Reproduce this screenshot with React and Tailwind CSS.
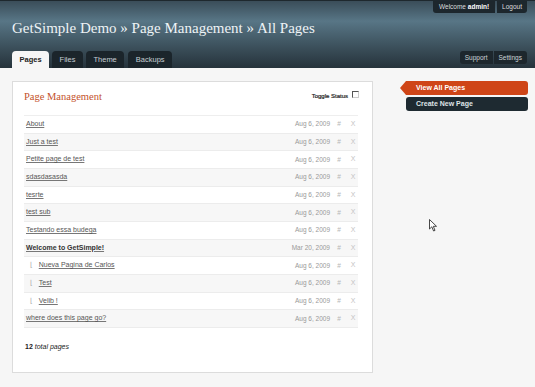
import React from "react";

const pages = [
  { title: "About", date: "Aug 6, 2009" },
  { title: "Just a test", date: "Aug 6, 2009" },
  { title: "Petite page de test", date: "Aug 6, 2009" },
  { title: "sdasdasasda", date: "Aug 6, 2009" },
  { title: "tesrte", date: "Aug 6, 2009" },
  { title: "test sub", date: "Aug 6, 2009" },
  { title: "Testando essa budega", date: "Aug 6, 2009" },
  { title: "Welcome to GetSimple!", date: "Mar 20, 2009", bold: true },
  { title: "Nueva Pagina de Carlos", date: "Aug 6, 2009", child: true },
  { title: "Test", date: "Aug 6, 2009", child: true },
  { title: "Velib !", date: "Aug 6, 2009", child: true },
  { title: "where does this page go?", date: "Aug 6, 2009" },
];

const tabs = ["Pages", "Files", "Theme", "Backups"];

const App = () => {
  return (
    <div className="relative min-h-[387px] bg-[#f6f6f6] font-['Liberation_Sans',Arial,sans-serif]">
      {/* header */}
      <div className="relative h-[68px] border-t border-[#1e282e] bg-gradient-to-b from-[#3a4d59] via-[#587686] via-30% to-[#26333b] px-3">
        <div className="absolute right-2 top-0 flex h-[12px] text-[6.5px] leading-[12px] text-[#ddd]">
          <div className="mr-[2px] rounded-bl-[3px] bg-[#1d272d] px-[6px]">
            Welcome <b className="text-white">admin!</b>
          </div>
          <div className="rounded-br-[3px] bg-[#1d272d] px-[5px]">Logout</div>
        </div>
        <h1 className="pt-[17px] font-['Liberation_Serif',Georgia,serif] text-[15px] leading-[20px] text-[#eef3f6]">
          GetSimple Demo » Page Management » All Pages
        </h1>
        <div className="absolute bottom-0 left-3 flex gap-[3px]">
          {tabs.map((t, i) => (
            <div
              key={t}
              className={`h-[17px] rounded-t-[4px] px-[7.5px] text-[7.5px] leading-[18px] ${
                i === 0
                  ? "bg-[#f6f6f6] font-bold text-[#222]"
                  : "bg-[#1b252b] text-[#c6ced3]"
              } ${i === 3 ? "ml-[1px]" : ""}`}
            >
              {t}
            </div>
          ))}
        </div>
        <div className="absolute bottom-[4px] right-2 flex gap-[1px] text-[6.5px] leading-[13px] text-[#ccd3d7]">
          <div className="rounded-l-[3px] bg-[#1d272d] px-[5px]">Support</div>
          <div className="rounded-r-[3px] bg-[#1d272d] px-[5px]">Settings</div>
        </div>
      </div>

      {/* body */}
      <div className="flex pt-[13px] pl-3">
        <div className="h-[292px] w-[361px] border border-[#dcdcdc] bg-white pl-[11px] pr-[14px]">
          <div className="flex h-[33px] items-end justify-between pb-[12px]">
            <h2 className="font-['Liberation_Serif',Georgia,serif] text-[10.5px] leading-[12px] text-[#c4522b]">
              Page Management
            </h2>
            <div className="flex items-center gap-[4px] pb-[1px] text-[6px] text-[#222]">
              <span className="[-webkit-text-stroke:0.2px_#222]">Toggle Status</span>
              <span className="mb-[4px] mr-[-1px] block h-[7px] w-[7px] border border-[#555] border-b-[#ccc] border-r-[#ccc]" />
            </div>
          </div>
          <div className="border-t border-[#eee]">
            {pages.map((p, i) => (
              <div
                key={p.title}
                className={`flex h-[17.67px] items-center border-b border-[#ececec] text-[7px] ${
                  i % 2 === 1 ? "bg-[#f7f7f7]" : "bg-white"
                }`}
              >
                <div className="flex flex-1 items-center pl-[2px]">
                  {p.child && (
                    <span className="ml-[4px] mr-[6px] font-['DejaVu_Sans',sans-serif] text-[7px] text-[#aaa]">
                      ⌊
                    </span>
                  )}
                  <span
                    className={`underline decoration-[#777] ${
                      p.bold ? "font-bold text-[#333]" : "text-[#555]"
                    }`}
                  >
                    {p.title}
                  </span>
                </div>
                <span className="text-[6.5px] text-[#999]">{p.date}</span>
                <span className="w-[18px] text-center text-[6.5px] text-[#b5b5b5]">#</span>
                <span className="w-[10px] text-center text-[7px] text-[#c4c4c4]">X</span>
              </div>
            ))}
          </div>
          <p className="mt-[14px] pl-[1px] text-[7px] text-[#222]">
            <b>12</b> <i>total pages</i>
          </p>
        </div>

        <div className="ml-[27px] flex w-[128px] flex-col gap-[2px]">
          <div className="relative ml-[6px] h-[14px] rounded-r-[3px] bg-[#cf4517] pl-[10px] text-[7px] font-bold leading-[14px] text-white">
            <span className="absolute left-[-6px] top-0 h-0 w-0 border-y-[7px] border-r-[6px] border-y-transparent border-r-[#cf4517]" />
            View All Pages
          </div>
          <div className="ml-[6px] h-[14px] rounded-[3px] bg-[#1e2a31] pl-[10px] text-[7px] font-bold leading-[14px] text-[#dfe4e7]">
            Create New Page
          </div>
        </div>
      </div>

      {/* mouse cursor */}
      <svg
        className="absolute left-[429px] top-[219px]"
        width="9"
        height="13"
        viewBox="0 0 9 13"
      >
        <path
          d="M0.5 0.5 L0.5 10 L2.8 7.8 L4.6 12 L6 11.4 L4.3 7.3 L7.5 7.3 Z"
          fill="#fff"
          stroke="#333"
          strokeWidth="0.9"
        />
      </svg>
    </div>
  );
};

export default App;
